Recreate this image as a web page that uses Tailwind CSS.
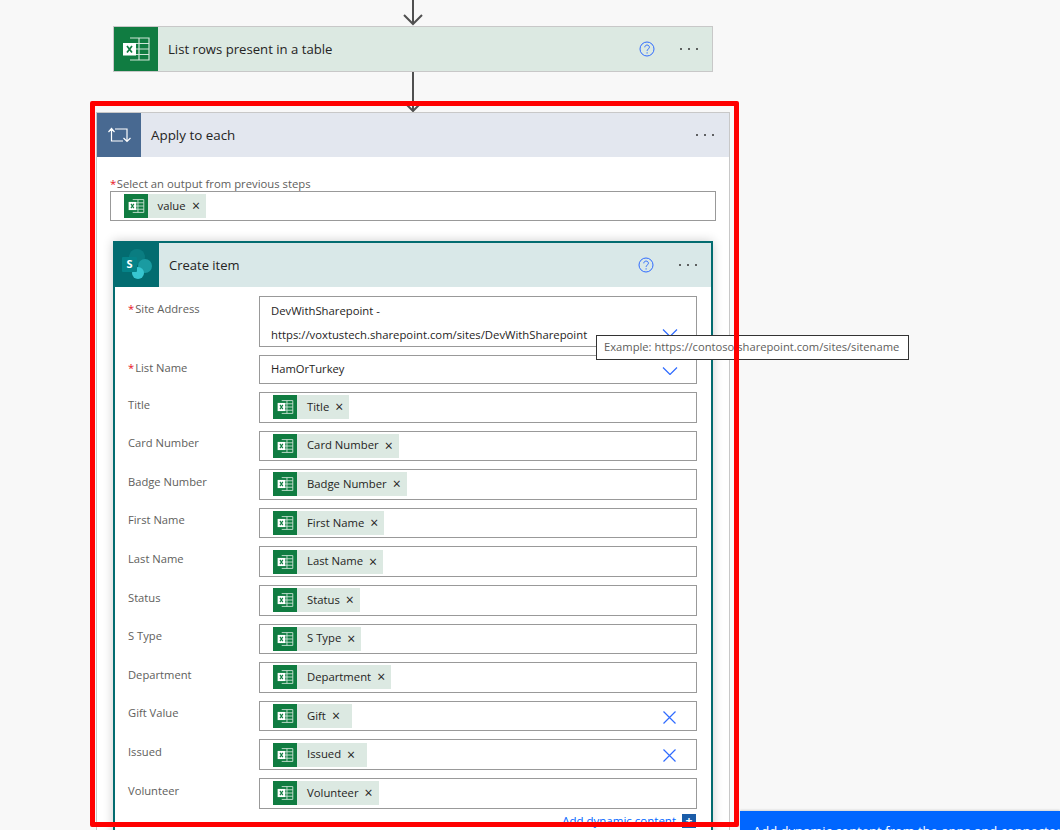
<!DOCTYPE html>
<html lang="en">
<head>
  <meta charset="UTF-8" />
  <title>Flow editor</title>
  <script src="https://cdn.jsdelivr.net/npm/@tailwindcss/browser@4"></script>
</head>
<body class="relative h-[830px] overflow-hidden bg-[#f8f8f8] font-['Open_Sans',sans-serif] text-[#252423]">

  <div class="flex w-[826px] flex-col items-center">
    <svg class="h-[26px] w-[20px]" viewBox="0 0 20 26" fill="none" stroke="#505050" stroke-width="2"><path d="M10 0V24M1 15l9 9 9-9" /></svg>

    <!-- List rows -->
    <div class="flex h-[46px] w-[600px] items-center border border-[#c8c8c8] bg-[#dce9e2]">
      <div class="flex h-[44px] w-[44px] shrink-0 items-center justify-center bg-[#107c41]">
        <svg class="h-[24px] w-[27px]" viewBox="0 0 27 24" fill="none"><path d="M7 1H26V23H7M16 1V23M7 6.500H26M7 12H26M7 17.500H26" stroke="#cfe5d8" stroke-width="1.200" /><rect x="0" y="6" width="13" height="12.500" fill="#fff" /><path d="M4 9l5 6.500M9 9l-5 6.500" stroke="#107c41" stroke-width="1.700" /></svg>
      </div>
      <span class="ml-[10px] pt-[2px] text-[13.150px]">List rows present in a table</span>
      <svg class="ml-auto h-[16px] w-[16px]" viewBox="0 0 16 16" fill="none" stroke="#2f6bff"><circle cx="8" cy="8" r="7" /><path d="M5.800 6.300c0-3 4.600-3 4.600 0 0 1.800-2.300 1.700-2.300 3.500M8.100 11.300v1.200" /></svg>
      <div class="mr-[14px] ml-[25px] flex gap-[5.500px]">
        <i class="h-[2.500px] w-[2.500px] rounded-full bg-[#333]"></i><i class="h-[2.500px] w-[2.500px] rounded-full bg-[#333]"></i><i class="h-[2.500px] w-[2.500px] rounded-full bg-[#333]"></i>
      </div>
    </div>

    <svg class="h-[40px] w-[20px]" viewBox="0 0 20 40" fill="none" stroke="#505050" stroke-width="2"><path d="M10 0V39M1 30l9 9 9-9" /></svg>

    <!-- Apply to each -->
    <div class="flex w-[634px] flex-col items-center border border-[#c8c8c8] bg-white">
      <div class="flex h-[44px] w-full items-center bg-[#e3e7ef]">
        <div class="flex h-[44px] w-[44px] shrink-0 items-center justify-center bg-[#486991]">
          <svg class="h-[16px] w-[23px]" viewBox="0 0 23 16" fill="none" stroke="#fff" stroke-width="1.200"><path d="M3.500 14.500V1.500M0.500 5l3-3.500 3 3.500M3.500 14H15M7 2H19V14.500M15.500 11l3.500 3.500 3.500-3.500" /></svg>
        </div>
        <span class="ml-[10px] pt-[1px] text-[13.400px]">Apply to each</span>
        <div class="mr-[15px] ml-auto flex gap-[5.500px]">
          <i class="h-[2.500px] w-[2.500px] rounded-full bg-[#333]"></i><i class="h-[2.500px] w-[2.500px] rounded-full bg-[#333]"></i><i class="h-[2.500px] w-[2.500px] rounded-full bg-[#333]"></i>
        </div>
      </div>

      <div class="mt-[20px] w-[606px] text-[11.300px] leading-[14px] text-[#605e5c]"><span class="mr-[0.500px] text-[#e81123]">*</span>Select an output from previous steps</div>
      <div class="flex h-[30px] w-[606px] items-center border border-[#999] pl-[13px]">
        <div class="flex h-[24px] items-center bg-[#dce9e2] pr-[6px] text-[11.300px]">
          <div class="flex h-[24px] w-[24px] items-center justify-center bg-[#107c41]"><svg class="h-[14px] w-[17px]" viewBox="0 0 27 24" fill="none"><path d="M7 1H26V23H7M16 1V23M7 6.500H26M7 12H26M7 17.500H26" stroke="#cfe5d8" stroke-width="1.500" /><rect x="0" y="5" width="13" height="14" fill="#fff" /><path d="M4 8.500l5 7M9 8.500l-5 7" stroke="#107c41" stroke-width="2" /></svg></div>
          <span class="ml-[9.500px]">value</span><span class="ml-[6.500px] text-[14px] leading-none">×</span>
        </div>
      </div>

      <!-- Create item -->
      <div class="mt-[20px] flex w-[600px] flex-col border-2 border-[#036c70] bg-white shadow-[0_0_10px_rgba(0,0,0,0.2)]">
        <div class="flex h-[44px] items-center bg-[#d9e8e8]">
          <div class="relative h-[44px] w-[44px] shrink-0 bg-[#036c70]">
            <span class="absolute top-[6px] left-[14px] h-[16px] w-[16px] rounded-full bg-[#0a7d81]"></span>
            <span class="absolute top-[16px] left-[23px] h-[14px] w-[14px] rounded-full bg-[#1a9ba1]"></span>
            <span class="absolute top-[24px] left-[17px] h-[12px] w-[12px] rounded-full bg-[#37c6d0]"></span>
            <span class="absolute top-[14px] left-[7px] flex h-[15px] w-[15px] items-center justify-center rounded-[1px] bg-[#058388] text-[11px] font-bold text-white">S</span>
          </div>
          <span class="ml-[10px] pt-[2px] text-[13px]">Create item</span>
          <svg class="ml-auto h-[16px] w-[16px]" viewBox="0 0 16 16" fill="none" stroke="#2f6bff"><circle cx="8" cy="8" r="7" /><path d="M5.800 6.300c0-3 4.600-3 4.600 0 0 1.800-2.300 1.700-2.300 3.500M8.100 11.300v1.200" /></svg>
          <div class="mr-[14px] ml-[25px] flex gap-[5.500px]">
            <i class="h-[2.500px] w-[2.500px] rounded-full bg-[#333]"></i><i class="h-[2.500px] w-[2.500px] rounded-full bg-[#333]"></i><i class="h-[2.500px] w-[2.500px] rounded-full bg-[#333]"></i>
          </div>
        </div>

        <div class="flex flex-col gap-[8px] pt-[9px] pr-[14px] pl-[13px]">
          <div class="flex">
            <div class="w-[131px] pt-[4.600px] text-[11.200px] leading-[16px] text-[#605e5c]"><span class="mr-[1px] text-[#e81123]">*</span>Site Address</div>
            <div class="relative h-[51px] w-[438px] border border-[#999] pt-[2px] pl-[11px] text-[11.300px] leading-[24px]">
              <div>DevWithSharepoint -</div>
              <div>https://voxtustech.sharepoint.com/sites/DevWithSharepoint</div>
              <svg class="absolute top-[32px] right-[18px] h-[8px] w-[16px]" viewBox="0 0 16 8" fill="none" stroke="#2f6bff" stroke-width="1.200"><path d="M1 0.500l7 7 7-7" /></svg>
            </div>
          </div>
          <div class="flex">
            <div class="w-[131px] pt-[4.600px] text-[11.200px] leading-[16px] text-[#605e5c]"><span class="mr-[1px] text-[#e81123]">*</span>List Name</div>
            <div class="relative flex h-[29px] w-[438px] items-center border border-[#999] pl-[11px] text-[11.200px]">
              HamOrTurkey
              <svg class="absolute top-[11px] right-[18px] h-[8px] w-[16px]" viewBox="0 0 16 8" fill="none" stroke="#2f6bff" stroke-width="1.200"><path d="M1 0.500l7 7 7-7" /></svg>
            </div>
          </div>
          <div id="rows" class="flex flex-col gap-[8px]"></div>
          <div class="mt-[-3px] mr-[1px] flex items-center justify-end gap-[6px] text-[11.500px] leading-[14px] text-[#0066ff]">
            Add dynamic content
            <span class="flex h-[14px] w-[14px] items-center justify-center bg-[#1a5ca8] text-[12px] font-bold text-white">+</span>
          </div>
          <div class="h-[20px]"></div>
        </div>
      </div>
    </div>
  </div>

  <!-- Tooltip -->
  <div class="absolute top-[335px] left-[596px] flex h-[25px] w-[313px] items-center border border-[#333] bg-white pl-[7px] text-[11.200px] text-[#605e5c]">Example: https://contoso.sharepoint.com/sites/sitename</div>

  <!-- Red highlight drawn over the screenshot -->
  <div class="absolute top-[101px] left-[90px] h-[726px] w-[649px] rounded-[2px] border-[5px] border-[#ff0000]"></div>

  <!-- Dynamic content hint -->
  <div class="absolute top-[811px] left-[740px] h-[19px] w-[320px] overflow-hidden bg-[#0066ff] pt-[11px] pl-[13px] text-[13px] whitespace-nowrap text-white shadow-[0_-1px_2px_rgba(0,0,0,0.15)]">Add dynamic content from the apps and connectors used in this flow.</div>

  <script>
    const fields = [
      ['Title', 'Title'],
      ['Card Number', 'Card Number'],
      ['Badge Number', 'Badge Number'],
      ['First Name', 'First Name'],
      ['Last Name', 'Last Name'],
      ['Status', 'Status'],
      ['S Type', 'S Type'],
      ['Department', 'Department'],
      ['Gift Value', 'Gift', true],
      ['Issued', 'Issued', true],
      ['Volunteer', 'Volunteer'],
    ];

    const clearIcon = `<svg class="absolute top-[9px] right-[20px] h-[13px] w-[13px]" viewBox="0 0 13 13" fill="none" stroke="#2f6bff" stroke-width="1.200"><path d="M0.500 0.500l12 12M12.500 0.500l-12 12" /></svg>`;

    document.getElementById('rows').innerHTML = fields.map(([label, token, clear]) => `
      <div class="flex">
        <div class="w-[131px] pt-[4.600px] text-[11.200px] leading-[16px] text-[#605e5c]">${label}</div>
        <div class="relative flex h-[30.600px] w-[438px] items-center border border-[#999] pl-[13px]">
          <div class="flex h-[24px] items-center bg-[#dce9e2] ${clear ? 'pr-[12px]' : 'pr-[6px]'} text-[11.300px]">
            <div class="flex h-[24px] w-[24px] items-center justify-center bg-[#107c41]"><svg class="h-[14px] w-[17px]" viewBox="0 0 27 24" fill="none"><path d="M7 1H26V23H7M16 1V23M7 6.500H26M7 12H26M7 17.500H26" stroke="#cfe5d8" stroke-width="1.500" /><rect x="0" y="5" width="13" height="14" fill="#fff" /><path d="M4 8.500l5 7M9 8.500l-5 7" stroke="#107c41" stroke-width="2" /></svg></div>
            <span class="ml-[10px]">${token}</span><span class="ml-[6px] text-[14px] leading-none">×</span>
          </div>
          ${clear ? clearIcon : ''}
        </div>
      </div>`).join('');
  </script>
</body>
</html>
